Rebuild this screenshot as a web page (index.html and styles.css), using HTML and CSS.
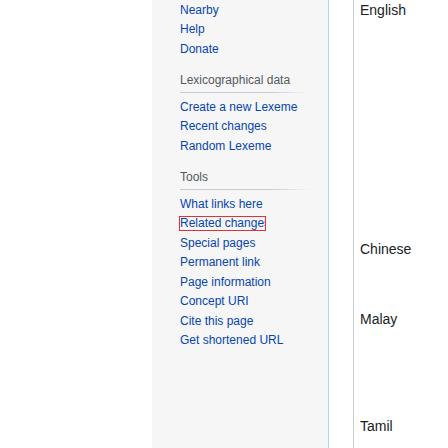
FILE: index.html
```html
<!DOCTYPE html>
<html>
<head>
<meta charset="utf-8">
<link rel="stylesheet" href="styles.css">
</head>
<body>
<div class="page">
  <div class="blank"></div>
  <nav class="sidebar">
    <ul class="menu">
      <li><a>Nearby</a></li>
      <li><a>Help</a></li>
      <li><a>Donate</a></li>
    </ul>
    <h3 class="heading">Lexicographical data</h3>
    <ul class="menu">
      <li><a>Create a new Lexeme</a></li>
      <li><a>Recent changes</a></li>
      <li><a>Random Lexeme</a></li>
    </ul>
    <h3 class="heading">Tools</h3>
    <ul class="menu">
      <li><a>What links here</a></li>
      <li><a class="boxed">Related changes</a></li>
      <li><a>Special pages</a></li>
      <li><a>Permanent link</a></li>
      <li><a>Page information</a></li>
      <li><a>Concept URI</a></li>
      <li><a>Cite this page</a></li>
      <li><a>Get shortened URL</a></li>
    </ul>
  </nav>
  <div class="gutter"></div>
  <div class="langs">
    <div class="lang english">English</div>
    <div class="lang chinese">Chinese</div>
    <div class="lang malay">Malay</div>
    <div class="lang tamil">Tamil</div>
  </div>
</div>
</body>
</html>
```
FILE: styles.css
```css
html, body {
  margin: 0;
  padding: 0;
  background: #ffffff;
  font-family: "Liberation Sans", Arial, sans-serif;
}
.page {
  display: flex;
  height: 448px;
  overflow: hidden;
}
.blank {
  width: 152px;
  flex: none;
}
.sidebar {
  width: 148px;
  flex: none;
  background: #f6f6f6;
  border-right: 1px solid #a7d7f9;
  padding: 0 0 0 28px;
  font-size: 12px;
}
.menu {
  list-style: none;
  margin: 0;
  padding: 0;
}
.menu li {
  padding: 2.5px 0;
  line-height: 14.5px;
  white-space: nowrap;
}
.menu a {
  color: #0645ad;
}
.menu a.boxed {
  display: inline-block;
  vertical-align: top;
  width: 85px;
  height: 13px;
  line-height: 13px;
  overflow: hidden;
  margin: 0 0 -2px -1px;
  border: 1px solid #d33;
}
.heading {
  margin: 14.5px 0 4.5px 0;
  padding: 0 0 5px 0;
  font-size: 12px;
  font-weight: normal;
  line-height: 14.5px;
  color: #54595d;
  width: 130px;
  background-image: linear-gradient(to right, #c8ccd1 0%, #c8ccd1 70%, rgba(200, 204, 209, 0) 100%);
  background-size: 100% 1px;
  background-repeat: no-repeat;
  background-position: bottom left;
}
.gutter {
  width: 24px;
  flex: none;
}
.langs {
  flex: 1;
  border-left: 1px solid #c8ccd1;
  padding-left: 6px;
  font-size: 14px;
  line-height: 20px;
  color: #202122;
}
.lang {
  height: 20px;
}
.chinese { margin-top: 219px; }
.malay { margin-top: 50px; }
.tamil { margin-top: 87px; }
```
